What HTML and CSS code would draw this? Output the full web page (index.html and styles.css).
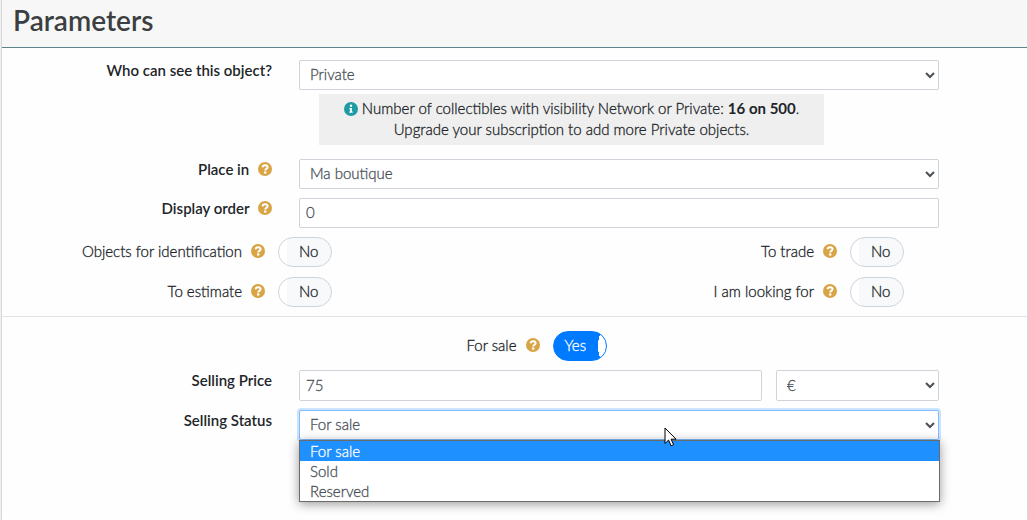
FILE: index.html
```html
<!DOCTYPE html>
<html lang="en">
<head>
  <meta charset="UTF-8" />
  <meta name="viewport" content="width=device-width, initial-scale=1.0"/>
  <title>Parameters</title>
  <link rel="stylesheet" href="styles.css">
</head>
<body>
  <svg class="sprite" aria-hidden="true">
    <symbol id="help" viewBox="0 0 14 14">
      <circle cx="7" cy="7" r="7" fill="#d8a444"/>
      <path d="M4.500 5.300C4.800 3.900 5.800 3.300 7.100 3.300c1.400 0 2.500.8 2.500 2 0 1.700-2.300 1.500-2.300 3.100" fill="none" stroke="#fff" stroke-width="2"/>
      <circle cx="7.200" cy="10.500" r="1.300" fill="#fff"/>
    </symbol>
    <symbol id="info" viewBox="0 0 14 14">
      <circle cx="7" cy="7" r="7" fill="#1f9ba5"/>
      <circle cx="7" cy="3.800" r="1.200" fill="#fff"/>
      <path d="M5.400 5.900h2.500v3.600h.8v1.300H5.300V9.500h.8V7.200h-.7z" fill="#fff"/>
    </symbol>
  </svg>

  <form class="card">
    <h1 class="card-header">Parameters</h1>

    <div class="section">
      <div class="row">
        <label class="label" for="visibility">Who can see this object?</label>
        <div>
          <select class="control" id="visibility">
            <option>Private</option>
          </select>
          <div class="note">
            <svg class="icon"><use href="#info"/></svg>
            Number of collectibles with visibility Network or Private: <b>16 on 500</b>.<br>
            Upgrade your subscription to add more Private objects.
          </div>
        </div>
      </div>

      <div class="row">
        <label class="label" for="place">Place in <svg class="icon help"><use href="#help"/></svg></label>
        <select class="control" id="place">
          <option>Ma boutique</option>
        </select>
      </div>

      <div class="row">
        <label class="label" for="order">Display order <svg class="icon help"><use href="#help"/></svg></label>
        <input class="control" id="order" type="text" value="0">
      </div>

      <div class="toggles">
        <label class="toggle">
          Objects for identification <svg class="icon help"><use href="#help"/></svg>
          <span class="switch"><input type="checkbox"><span class="state">No</span></span>
        </label>
        <label class="toggle">
          To trade <svg class="icon help"><use href="#help"/></svg>
          <span class="switch"><input type="checkbox"><span class="state">No</span></span>
        </label>
        <label class="toggle">
          To estimate <svg class="icon help"><use href="#help"/></svg>
          <span class="switch"><input type="checkbox"><span class="state">No</span></span>
        </label>
        <label class="toggle">
          I am looking for <svg class="icon help"><use href="#help"/></svg>
          <span class="switch"><input type="checkbox"><span class="state">No</span></span>
        </label>
      </div>
    </div>

    <div class="section sale">
      <label class="toggle toggle-center">
        For sale <svg class="icon help"><use href="#help"/></svg>
        <span class="switch on"><input type="checkbox" checked><span class="state">Yes</span></span>
      </label>

      <div class="row">
        <label class="label" for="price">Selling Price</label>
        <div class="price">
          <input class="control" id="price" type="text" value="75">
          <select class="control" aria-label="Currency">
            <option>€</option>
          </select>
        </div>
      </div>

      <div class="row">
        <label class="label" for="status">Selling Status</label>
        <div class="dropdown">
          <select class="control focused" id="status">
            <option>For sale</option>
            <option>Sold</option>
            <option>Reserved</option>
          </select>
          <ul class="options">
            <li class="selected">For sale</li>
            <li>Sold</li>
            <li>Reserved</li>
          </ul>
          <svg class="cursor" viewBox="0 0 13 20">
            <path d="M1 1v15.500l3.600-3.400 2.500 5.700 2.500-1.100-2.500-5.500h5z" fill="#fff" stroke="#000"/>
          </svg>
        </div>
      </div>
    </div>
  </form>
</body>
</html>
```
FILE: styles.css
```css
* {
  box-sizing: border-box;
}

body {
  margin: 0;
  padding: 0 1px 0 2px;
  background: #f7f7f7;
  color: #212529;
  font: 300 15px/21px Lato, "Liberation Sans", sans-serif;
  -webkit-text-stroke: 0.3px;
}

.sprite {
  position: absolute;
  width: 0;
  height: 0;
}

.card {
  background: #fefefe;
  box-shadow: 0 0 2px rgba(0,0,0,0.4);
}

.card-header {
  margin: 0;
  padding: 3px 11px 10px;
  background: #f7f7f7;
  border-bottom: 1px solid #5a838a;
  color: #3c3f41;
  font-size: 28px;
  line-height: 34px;
  font-weight: 600;
}

.section {
  display: flex;
  flex-direction: column;
  gap: 9px;
  padding: 12px 0 9px;
}

.sale {
  border-top: 1px solid #dee2e6;
  padding: 14px 0 80px;
}

.row {
  display: grid;
  grid-template-columns: 27fr 64fr;
  column-gap: 27px;
  padding-right: 88px;
}

.label {
  text-align: right;
  font-weight: 600;
  line-height: 20px;
}

.label, .note b, .card-header {
  -webkit-text-stroke: 0;
}

.icon {
  width: 14px;
  height: 14px;
  vertical-align: -2px;
}

.help {
  margin-left: 5px;
}

.label .help {
  vertical-align: -1px;
}

.control {
  display: block;
  width: 100%;
  height: 30px;
  padding: 3px 6px 5px;
  border: 1px solid #ced4da;
  border-radius: 2px;
  background: #fff;
  color: #495057;
  font: inherit;
}

.note {
  margin: 4px 115px 5px 20px;
  padding: 4px 0 5px;
  background: #efefef;
  text-align: center;
  white-space: nowrap;
}

.note b {
  font-weight: 700;
}

.toggles {
  display: grid;
  grid-template-columns: 15fr 26fr;
  row-gap: 10px;
  padding-right: 123px;
}

.toggle {
  display: flex;
  justify-content: flex-end;
  line-height: 28px;
}

.toggle .help {
  margin: 7px 13px 0 9px;
}

.toggle-center {
  justify-content: center;
  padding-left: 44px;
}

.switch {
  display: grid;
  width: 54px;
  height: 30px;
}

.switch input {
  grid-area: 1 / 1;
  appearance: none;
  width: 54px;
  height: 30px;
  margin: 0;
  border: 1px solid #ced4da;
  border-radius: 15px;
  background: linear-gradient(to right, #fff 8px, #f8f9fa 8px);
}

.state {
  grid-area: 1 / 1;
  padding-left: 21px;
}

.on input {
  border-color: #007bff;
  background: radial-gradient(ellipse 9px 18px at 53px 14px, #fff 99%, #007bff);
}

.on .state {
  padding-left: 12px;
  color: #fff;
}

.price {
  display: grid;
  grid-template-columns: 463fr 163fr;
  gap: 14px;
}

.price .control {
  height: 31px;
}

.dropdown {
  position: relative;
}

.focused {
  border-color: #80bdff;
  box-shadow: 0 0 0 2px #cce4ff;
}

.options {
  position: absolute;
  top: 30px;
  left: 0;
  right: -1px;
  margin: 0;
  padding: 0;
  list-style: none;
  background: #fff;
  border: 1px solid #6b6b6b;
  box-shadow: 0 2px 10px rgba(0,0,0,0.4);
  color: #495057;
  line-height: 20px;
}

.options li {
  padding: 0 10px;
}

.options .selected {
  background: #1e90ff;
  color: #fff;
}

.cursor {
  position: absolute;
  top: 17px;
  left: 57%;
  width: 13px;
  height: 20px;
}
```
